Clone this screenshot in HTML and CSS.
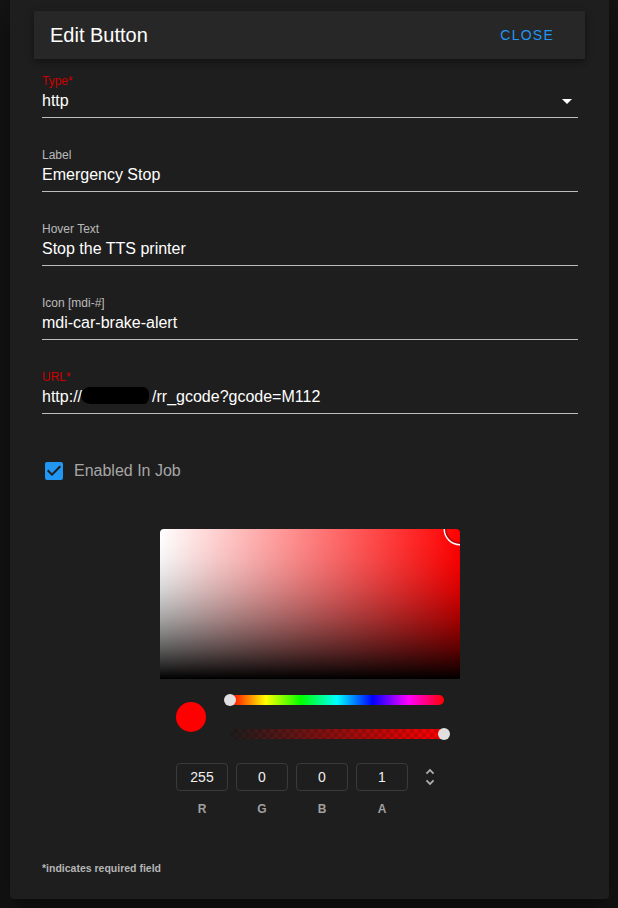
FILE: index.html
```html
<!DOCTYPE html>
<html lang="en">
<head>
<meta charset="utf-8">
<title>Edit Button</title>
<link rel="stylesheet" href="styles.css">
</head>
<body>
<div class="dialog">
  <div class="toolbar">
    <div class="title">Edit Button</div>
    <div class="spacer"></div>
    <div class="close">Close</div>
  </div>
  <div class="form">
    <div class="field">
      <div class="label error">Type*</div>
      <div class="value-row">
        <span class="value">http</span>
        <svg class="arrow" viewBox="0 0 24 24" width="24" height="24"><path d="M7,10L12,15L17,10H7Z" fill="#fff"/></svg>
      </div>
    </div>
    <div class="field">
      <div class="label">Label</div>
      <div class="value-row"><span class="value">Emergency Stop</span></div>
    </div>
    <div class="field">
      <div class="label">Hover Text</div>
      <div class="value-row"><span class="value">Stop the TTS printer</span></div>
    </div>
    <div class="field">
      <div class="label">Icon [mdi-#]</div>
      <div class="value-row"><span class="value">mdi-car-brake-alert</span></div>
    </div>
    <div class="field">
      <div class="label error">URL*</div>
      <div class="value-row"><span class="value">http://<span class="redact"></span>/rr_gcode?gcode=M112</span></div>
    </div>

    <div class="checkrow">
      <svg class="checkbox" viewBox="0 0 24 24" width="24" height="24"><path d="M10,17L5,12L6.41,10.58L10,14.17L17.59,6.58L19,8M19,3H5C3.89,3 3,3.89 3,5V19A2,2 0 0,0 5,21H19A2,2 0 0,0 21,19V5C21,3.89 20.1,3 19,3Z" fill="#2196f3"/></svg>
      <span class="checklabel">Enabled In Job</span>
    </div>

    <div class="picker">
      <div class="canvas">
        <div class="canvas-dot"></div>
      </div>
      <div class="controls">
        <div class="preview">
          <div class="preview-dot"></div>
          <div class="sliders">
            <div class="hue"><div class="thumb thumb-start"></div></div>
            <div class="alpha"><div class="thumb thumb-end"></div></div>
          </div>
        </div>
        <div class="edits">
          <div class="edit"><div class="box">255</div><span class="ch">R</span></div>
          <div class="edit"><div class="box">0</div><span class="ch">G</span></div>
          <div class="edit"><div class="box">0</div><span class="ch">B</span></div>
          <div class="edit"><div class="box">1</div><span class="ch">A</span></div>
          <div class="switch">
            <svg viewBox="0 0 24 24" width="22" height="22"><path d="M12,18.17L8.83,15L7.42,16.41L12,21L16.59,16.41L15.17,15M12,5.83L15.17,9L16.58,7.59L12,3L7.41,7.59L8.83,9L12,5.83Z" fill="#b0b0b0"/></svg>
          </div>
        </div>
      </div>
    </div>

    <div class="footnote">*indicates required field</div>
  </div>
</div>
</body>
</html>
```

FILE: styles.css
```css
html, body {
  margin: 0;
  padding: 0;
}
body {
  background: #151515;
  font-family: "Liberation Sans", Arial, sans-serif;
  height: 908px;
  overflow: hidden;
}
.dialog {
  margin: 0 9px 0 10px;
  height: 899px;
  box-sizing: border-box;
  background: #1e1e1e;
  border-radius: 0 0 4px 4px;
  padding: 11px 24px 0 24px;
  box-shadow: 0 11px 15px -7px rgba(0,0,0,.3), 0 24px 38px 3px rgba(0,0,0,.2), 0 9px 46px 8px rgba(0,0,0,.18);
}
.toolbar {
  height: 48px;
  display: flex;
  align-items: center;
  padding: 0 16px;
  background: #272727;
  box-shadow: 0 2px 4px -1px rgba(0,0,0,.2), 0 4px 5px 0 rgba(0,0,0,.14), 0 1px 10px 0 rgba(0,0,0,.12);
}
.title {
  color: #fff;
  font-size: 20px;
  line-height: 24px;
}
.spacer { flex: 1; }
.close {
  color: #2196f3;
  font-size: 14px;
  letter-spacing: 1.25px;
  text-transform: uppercase;
  padding: 0 15px 0 16px;
}
.form {
  padding: 15px 7px 0 8px;
}
.field {
  border-bottom: 1px solid rgba(255,255,255,.7);
  padding-bottom: 6px;
  margin-bottom: 30px;
}
.label {
  font-size: 12px;
  line-height: 14px;
  color: rgba(255,255,255,.7);
}
.label.error { color: #cc0000; }
.value-row {
  margin-top: 3px;
  height: 20px;
  display: flex;
  align-items: center;
}
.value {
  flex: 1;
  font-size: 16px;
  line-height: 20px;
  color: #fff;
  white-space: nowrap;
}
.arrow {
  flex: none;
  margin-right: -1px;
}
.redact {
  display: inline-block;
  vertical-align: middle;
  width: 68px;
  height: 17px;
  margin: -4px 3px 0 -1px;
  background: #000;
  border-radius: 10px 6px 5px 10px / 9px 8px 8px 9px;
}
.checkrow {
  margin-top: 45px;
  display: flex;
  align-items: center;
  height: 24px;
}
.checkbox { flex: none; }
.checklabel {
  margin-left: 8px;
  font-size: 16px;
  line-height: 20px;
  color: #a6a6a6;
}
.picker {
  width: 300px;
  margin: 46px auto 0;
}
.canvas {
  position: relative;
  width: 300px;
  height: 150px;
  border-radius: 4px 4px 0 0;
  overflow: hidden;
  background:
    linear-gradient(to top,
      rgba(0,0,0,1) 0%,
      rgba(0,0,0,.81) 10%,
      rgba(0,0,0,.64) 20%,
      rgba(0,0,0,.49) 30%,
      rgba(0,0,0,.36) 40%,
      rgba(0,0,0,.25) 50%,
      rgba(0,0,0,.16) 60%,
      rgba(0,0,0,.09) 70%,
      rgba(0,0,0,.04) 80%,
      rgba(0,0,0,.01) 90%,
      rgba(0,0,0,0) 100%),
    linear-gradient(to right, #fff, #f00);
}
.canvas-dot {
  position: absolute;
  left: 285px;
  top: -15px;
  width: 30px;
  height: 30px;
  border-radius: 50%;
  box-shadow: 0 0 0 1.5px #fff, inset 0 0 1px 1.5px rgba(0,0,0,.3);
}
.controls {
  padding: 16px;
}
.preview {
  display: flex;
  align-items: center;
}
.preview-dot {
  width: 30px;
  height: 30px;
  border-radius: 50%;
  background: #f00;
  margin-right: 24px;
  flex: none;
}
.sliders {
  flex: 1;
  display: flex;
  flex-direction: column;
  gap: 24px;
}
.hue, .alpha {
  position: relative;
  height: 10px;
  border-radius: 5px;
}
.hue {
  background: linear-gradient(to right, #f00 0%, #ff0 16.66%, #0f0 33.33%, #0ff 50%, #00f 66.66%, #f0f 83.33%, #f00 100%);
}
.alpha {
  border-radius: 0 5px 5px 0;
  background:
    linear-gradient(45deg, rgba(0,0,0,.14) 25%, transparent 25%, transparent 75%, rgba(0,0,0,.14) 75%),
    linear-gradient(45deg, rgba(0,0,0,.14) 25%, transparent 25%, transparent 75%, rgba(0,0,0,.14) 75%),
    linear-gradient(to right, rgba(255,0,0,0), #f00);
  background-size: 8px 8px, 8px 8px, 100% 100%;
  background-position: 0 0, 4px 4px, 0 0;
}
.thumb {
  position: absolute;
  top: -1px;
  width: 12px;
  height: 12px;
  border-radius: 50%;
  background: #e0e0e0;
}
.thumb-start { left: -6px; }
.thumb-end { right: -6px; }
.edits {
  margin-top: 24px;
  display: flex;
  gap: 8px;
}
.edit {
  width: 52px;
  display: flex;
  flex-direction: column;
  align-items: center;
}
.box {
  width: 52px;
  height: 28px;
  box-sizing: border-box;
  border: 1px solid #3a3a3a;
  border-radius: 4px;
  display: flex;
  align-items: center;
  justify-content: center;
  font-size: 14px;
  color: #f0f0f0;
}
.ch {
  margin-top: 11px;
  font-size: 12px;
  line-height: 14px;
  font-weight: 700;
  color: #a0a0a0;
}
.switch {
  width: 28px;
  height: 28px;
  display: flex;
  align-items: center;
  justify-content: center;
}
.footnote {
  margin-top: 30px;
  font-size: 10.5px;
  line-height: 13px;
  font-weight: 700;
  color: #b5b5b5;
}
```
